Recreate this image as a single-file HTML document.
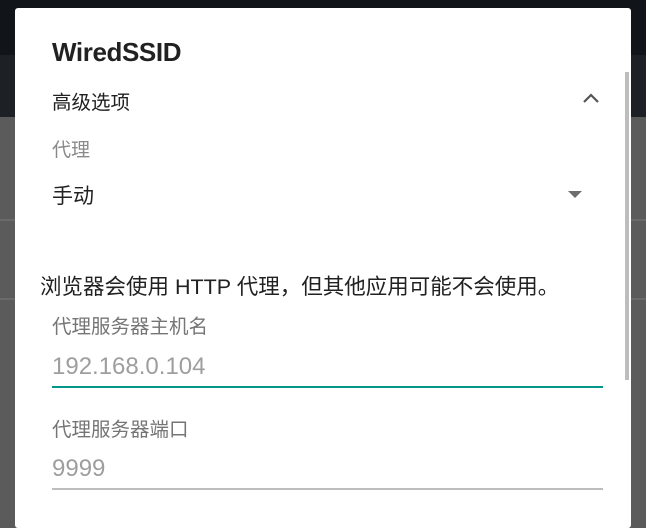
<!DOCTYPE html>
<html><head><meta charset="utf-8"><style>
body{margin:0;width:646px;height:517px;overflow:hidden;position:relative;background:#5b5b5b;font-family:"Liberation Sans","Noto Sans CJK SC",sans-serif;}
.a{position:absolute;white-space:nowrap;}
</style></head><body>
<div class="a" style="left:0;top:0;width:646px;height:55px;background:#111418"></div>
<div class="a" style="left:0;top:55px;width:646px;height:62px;background:#1d2125"></div>
<div class="a" style="left:0;top:219px;width:646px;height:2px;background:#6a6a6a"></div>
<div class="a" style="left:0;top:298px;width:646px;height:2px;background:#6a6a6a"></div>
<div class="a" style="left:15px;top:8px;width:616px;height:520px;background:#fff;border-radius:3px"></div>
<div class="a" style="left:625px;top:72px;width:4px;height:308px;background:#bdbdbd"></div>
<div class="a" style="left:52px;top:37px;font-size:26px;font-weight:bold;color:#212121;letter-spacing:-0.4px">WiredSSID</div>
<div class="a" style="left:52px;top:86px;font-size:19.5px;color:#212121">高级选项</div>
<svg class="a" style="left:582px;top:92px" width="18" height="12"><path d="M2 10 L9 3 L16 10" stroke="#555" stroke-width="2.2" fill="none"/></svg>
<div class="a" style="left:52px;top:135px;font-size:19px;color:#8a8a8a">代理</div>
<div class="a" style="left:52px;top:180px;font-size:21px;color:#212121">手动</div>
<svg class="a" style="left:568px;top:191px" width="14" height="8"><path d="M0 0 L14 0 L7 7 Z" fill="#6d6d6d"/></svg>
<div class="a" style="left:40px;top:270px;font-size:21.5px;color:#212121">浏览器会使用 HTTP 代理，但其他应用可能不会使用。</div>
<div class="a" style="left:52px;top:310px;font-size:19.5px;color:#757575">代理服务器主机名</div>
<div class="a" style="left:52px;top:353px;font-size:24px;color:#9e9e9e">192.168.0.104</div>
<div class="a" style="left:52px;top:386px;width:551px;height:2px;background:#009688"></div>
<div class="a" style="left:52px;top:413px;font-size:19.5px;color:#757575">代理服务器端口</div>
<div class="a" style="left:52px;top:455px;font-size:24px;color:#9e9e9e">9999</div>
<div class="a" style="left:52px;top:488px;width:551px;height:2px;background:#bdbdbd"></div>
</body></html>
